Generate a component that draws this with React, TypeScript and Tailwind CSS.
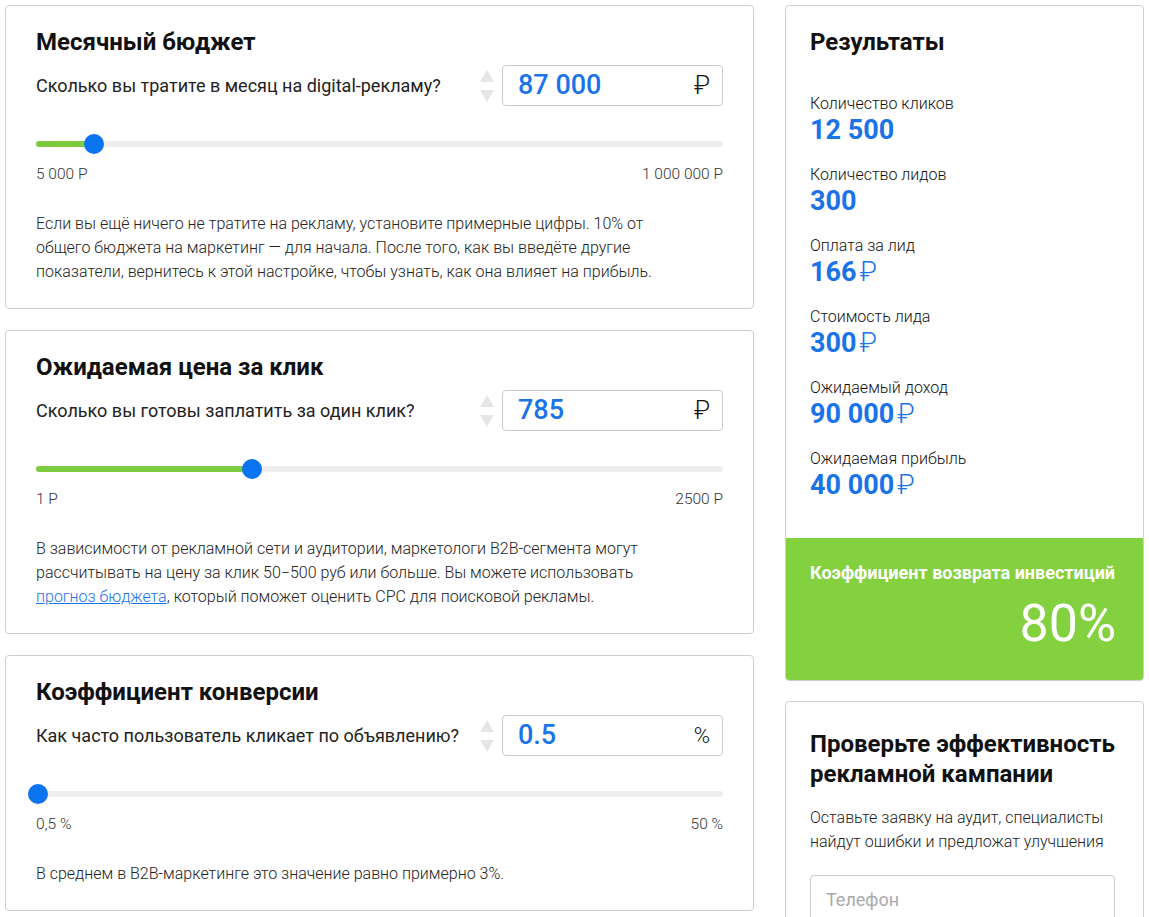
const FONT = { fontFamily: 'Roboto, "Noto Sans", Arial, sans-serif' };

type CardProps = {
  title: string;
  question: string;
  value: string;
  unit: string;
  unitClass?: string;
  pct: number;
  min: string;
  max: string;
  children: React.ReactNode;
};

function Spinner() {
  return (
    <div className="flex flex-col gap-[8px] mr-[8px]">
      <svg width="14" height="12" viewBox="0 0 14 12">
        <path d="M7 0 L14 12 L0 12 Z" fill="#e6e6e6" />
      </svg>
      <svg width="14" height="12" viewBox="0 0 14 12">
        <path d="M0 0 L14 0 L7 12 Z" fill="#e6e6e6" />
      </svg>
    </div>
  );
}

function Slider({ pct }: { pct: number }) {
  return (
    <div className="relative h-[20px] mt-[28px]">
      <div className="absolute left-0 right-0 top-[7px] h-[6px] rounded-full bg-[#eeeeee]" />
      <div
        className="absolute left-0 top-[7px] h-[6px] rounded-full bg-[#7ccb40]"
        style={{ width: `${pct}%` }}
      />
      <div
        className="absolute top-0 w-[20px] h-[20px] rounded-full bg-[#0a74f0]"
        style={{ left: `calc(${pct}% - 8px)` }}
      />
    </div>
  );
}

function Card({ title, question, value, unit, unitClass, pct, min, max, children }: CardProps) {
  return (
    <div className="shrink-0 bg-white border border-[#cfcfcf] rounded-[4px] pl-[30px] pr-[30px] pt-[22px] pb-[24px]">
      <h2 className="text-[24px] leading-[28px] font-bold text-[#111]">{title}</h2>
      <div className="flex items-center justify-between mt-[9px]">
        <div className="text-[18px] leading-[24px] text-[#222]">{question}</div>
        <div className="flex items-center">
          <Spinner />
          <div className="w-[221px] h-[41px] border border-[#cccccc] rounded-[4px] flex items-center justify-between pl-[15px] pr-[12px]">
            <span className="text-[27px] font-medium text-[#1a73e8] leading-none">{value}</span>
            <span className={unitClass ?? 'text-[25px] font-light text-[#111] leading-none'}>{unit}</span>
          </div>
        </div>
      </div>
      <Slider pct={pct} />
      <div className="flex justify-between mt-[10px] text-[15.5px] leading-[20px] font-light text-[#333]">
        <span>{min}</span>
        <span>{max}</span>
      </div>
      <div className="mt-[28px] text-[16px] leading-[24px] font-light text-[#222]">{children}</div>
    </div>
  );
}

function Result({ label, value, rub }: { label: string; value: string; rub?: boolean }) {
  return (
    <div>
      <div className="text-[16px] leading-[20px] font-light text-[#111]">{label}</div>
      <div className="text-[27px] leading-[32px] font-bold text-[#1a73e8]">
        {value}
        {rub && <span className="font-light ml-[3px]">₽</span>}
      </div>
    </div>
  );
}

export default function App() {
  return (
    <div style={FONT} className="bg-white w-[1149px] h-[917px] overflow-hidden flex items-start gap-[31px] p-[5px]">
      <div className="w-[749px] flex flex-col gap-[21px] shrink-0">
        <Card
          title="Месячный бюджет"
          question="Сколько вы тратите в месяц на digital-рекламу?"
          value="87 000"
          unit="₽"
          pct={8.2}
          min="5 000 Р"
          max="1 000 000 Р"
        >
          Если вы ещё ничего не тратите на рекламу, установите примерные цифры. 10% от
          <br />
          общего бюджета на маркетинг — для начала. После того, как вы введёте другие
          <br />
          показатели, вернитесь к этой настройке, чтобы узнать, как она влияет на прибыль.
        </Card>
        <Card
          title="Ожидаемая цена за клик"
          question="Сколько вы готовы заплатить за один клик?"
          value="785"
          unit="₽"
          pct={31.2}
          min="1 Р"
          max="2500 Р"
        >
          В зависимости от рекламной сети и аудитории, маркетологи B2B-сегмента могут
          <br />
          рассчитывать на цену за клик 50−500 руб или больше. Вы можете использовать
          <br />
          <a className="text-[#1a73e8] underline">прогноз бюджета</a>, который поможет оценить CPC для поисковой рекламы.
        </Card>
        <Card
          title="Коэффициент конверсии"
          question="Как часто пользователь кликает по объявлению?"
          value="0.5"
          unit="%"
          unitClass="text-[22px] font-light text-[#111] leading-none"
          pct={0}
          min="0,5 %"
          max="50 %"
        >
          В среднем в B2B-маркетинге это значение равно примерно 3%.
        </Card>
      </div>

      <div className="w-[359px] flex flex-col gap-[20px] shrink-0">
        <div className="shrink-0 border border-[#cfcfcf] rounded-[4px] overflow-hidden">
          <div className="pl-[24px] pr-[24px] pt-[22px] pb-[37px]">
            <h2 className="text-[24px] leading-[28px] font-bold text-[#111]">Результаты</h2>
            <div className="mt-[38px] flex flex-col gap-[19px]">
              <Result label="Количество кликов" value="12 500" />
              <Result label="Количество лидов" value="300" />
              <Result label="Оплата за лид" value="166" rub />
              <Result label="Стоимость лида" value="300" rub />
              <Result label="Ожидаемый доход" value="90 000" rub />
              <Result label="Ожидаемая прибыль" value="40 000" rub />
            </div>
          </div>
          <div className="bg-[#84d13f] pl-[24px] pr-[27px] pt-[24px] pb-[26px] text-white">
            <div className="text-[18px] leading-[22px] font-bold">Коэффициент возврата инвестиций</div>
            <div className="text-right text-[52px] leading-[60px] mt-[10px]">80%</div>
          </div>
        </div>

        <div className="shrink-0 border border-[#cfcfcf] rounded-[4px] pl-[24px] pr-[28px] pt-[27px] pb-[30px]">
          <h2 className="text-[24px] leading-[30px] font-bold text-[#111]">
            Проверьте эффективность рекламной кампании
          </h2>
          <p className="mt-[17px] text-[16px] leading-[24px] font-light text-[#222]">
            Оставьте заявку на аудит, специалисты найдут ошибки и предложат улучшения
          </p>
          <div className="mt-[21px] h-[48px] border border-[#cccccc] rounded-[4px] flex items-center pl-[15px] text-[18px] text-[#aaaaaa]">
            Телефон
          </div>
        </div>
      </div>
    </div>
  );
}
